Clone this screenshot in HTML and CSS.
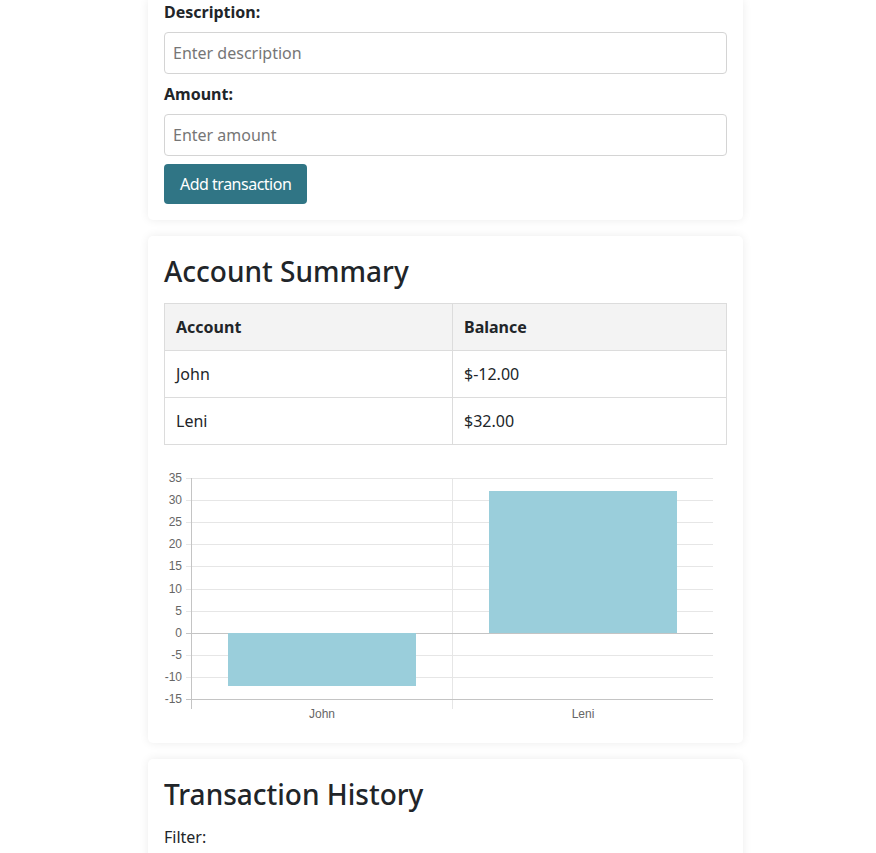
FILE: index.html
```html
<!DOCTYPE html>
<html>
<head>
<meta charset="utf-8">
<link rel="stylesheet" href="styles.css">
</head>
<body>
<div class="container">
  <section class="card card-cut">
    <label class="field-label" for="desc">Description:</label>
    <input id="desc" class="field" type="text" placeholder="Enter description">
    <label class="field-label" for="amt">Amount:</label>
    <input id="amt" class="field" type="text" placeholder="Enter amount">
    <button class="btn">Add transaction</button>
  </section>

  <section class="card">
    <h2 class="card-title">Account Summary</h2>
    <table class="summary">
      <thead>
        <tr><th class="col-account">Account</th><th>Balance</th></tr>
      </thead>
      <tbody>
        <tr><td>John</td><td>$-12.00</td></tr>
        <tr><td>Leni</td><td>$32.00</td></tr>
      </tbody>
    </table>
    <svg class="chart" width="563" height="265" viewBox="0 0 563 265">
      <g class="grid">
        <line x1="22" y1="16.5" x2="549" y2="16.5"/>
        <line x1="22" y1="38.5" x2="549" y2="38.5"/>
        <line x1="22" y1="60.5" x2="549" y2="60.5"/>
        <line x1="22" y1="82.5" x2="549" y2="82.5"/>
        <line x1="22" y1="104.5" x2="549" y2="104.5"/>
        <line x1="22" y1="127.5" x2="549" y2="127.5"/>
        <line x1="22" y1="149.5" x2="549" y2="149.5"/>
        <line x1="22" y1="193.5" x2="549" y2="193.5"/>
        <line x1="22" y1="215.5" x2="549" y2="215.5"/>
        <line x1="288.5" y1="16" x2="288.5" y2="247"/>
      </g>
      <g class="axis">
        <line x1="27.5" y1="16" x2="27.5" y2="247"/>
        <line x1="22" y1="171.5" x2="549" y2="171.5"/>
        <line x1="22" y1="237.5" x2="549" y2="237.5"/>
      </g>
      <rect class="bar" x="64" y="171" width="188" height="53"/>
      <rect class="bar" x="325" y="29" width="188" height="142"/>
      <g class="ylabels">
        <text x="18" y="20">35</text>
        <text x="18" y="42">30</text>
        <text x="18" y="64">25</text>
        <text x="18" y="86">20</text>
        <text x="18" y="108">15</text>
        <text x="18" y="131">10</text>
        <text x="18" y="153">5</text>
        <text x="18" y="175">0</text>
        <text x="18" y="197">-5</text>
        <text x="18" y="219">-10</text>
        <text x="18" y="241">-15</text>
      </g>
      <g class="xlabels">
        <text x="158" y="256">John</text>
        <text x="419" y="256">Leni</text>
      </g>
    </svg>
  </section>

  <section class="card">
    <h2 class="card-title">Transaction History</h2>
    <p class="filter">Filter:</p>
    <div class="spacer"></div>
  </section>
</div>
</body>
</html>
```
FILE: styles.css
```css
html, body {
  margin: 0;
  padding: 0;
  background: #fff;
}
body {
  font-family: "Noto Sans", "Open Sans", sans-serif;
  color: #212529;
  font-size: 16px;
  padding-left: 15px;
}
.container {
  width: 595px;
  margin: 0 auto;
  display: flex;
  flex-direction: column;
  gap: 16px;
}
.card {
  background: #fff;
  border-radius: 5px;
  box-shadow: 0 0 10px rgba(0,0,0,0.08);
  padding: 16px;
  display: flex;
  flex-direction: column;
}
.card-cut {
  padding-top: 1px;
  border-top-left-radius: 0;
  border-top-right-radius: 0;
}
.field-label {
  font-weight: 700;
  font-size: 16px;
  line-height: 22px;
  margin-bottom: 9px;
}
.field {
  height: 42px;
  box-sizing: border-box;
  border: 1px solid #d4d4d4;
  border-radius: 4px;
  padding: 0 8px;
  font-family: inherit;
  font-size: 16px;
  color: #212529;
  margin-bottom: 9px;
}
.field::placeholder {
  color: #767676;
}
.btn {
  align-self: flex-start;
  height: 40px;
  padding: 0 16px;
  background: #307585;
  color: #fff;
  border: none;
  border-radius: 4px;
  font-family: inherit;
  font-size: 16px;
  letter-spacing: -0.5px;
  margin-top: -1px;
}
.card-title {
  font-size: 28px;
  font-weight: 500;
  line-height: 34px;
  margin: 2px 0 15px;
}
.summary {
  width: 100%;
  border-collapse: collapse;
  font-size: 16px;
}
.summary th, .summary td {
  border: 1px solid #dcdcdc;
  text-align: left;
  padding: 0 11px;
  height: 46px;
}
.summary th {
  background: #f3f3f3;
  font-weight: 700;
}
.col-account {
  width: 288px;
  box-sizing: border-box;
}
.chart {
  display: block;
  margin-top: 17px;
}
.grid line {
  stroke: #e6e6e6;
  stroke-width: 1;
}
.axis line {
  stroke: #c4c4c4;
  stroke-width: 1;
}
.bar {
  fill: #9acedb;
}
.ylabels text {
  font-family: "Liberation Sans", Arial, sans-serif;
  font-size: 12px;
  fill: #666;
  text-anchor: end;
}
.xlabels text {
  font-family: "Liberation Sans", Arial, sans-serif;
  font-size: 12px;
  fill: #666;
  text-anchor: middle;
}
.filter {
  margin: 0;
  font-size: 16px;
}
.spacer {
  height: 60px;
}
```
